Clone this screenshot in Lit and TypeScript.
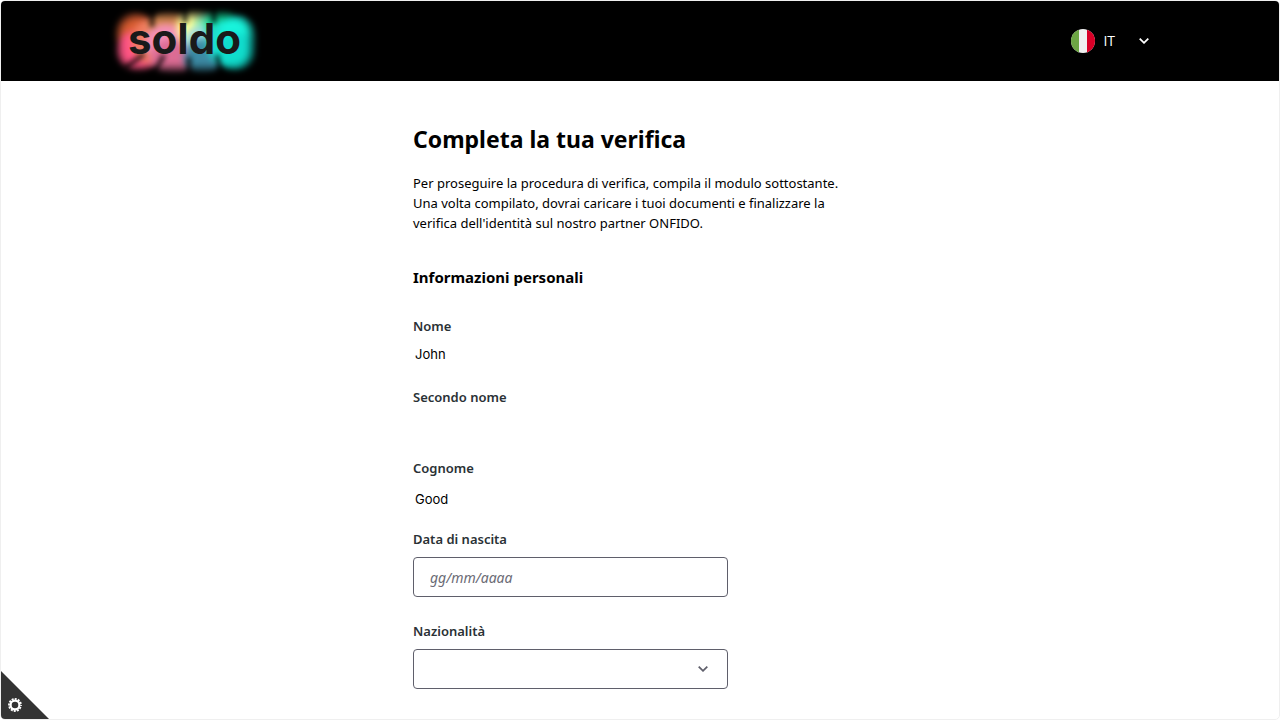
import { LitElement, html, svg, css } from "lit";
import { customElement, property, state } from "lit/decorators.js";
import { classMap } from "lit/directives/class-map.js";

const chevron = html`<svg class="chevron" width="10" height="6" viewBox="0 0 10 6" fill="none" stroke="currentColor" stroke-width="1.8" aria-hidden="true">
  <path d="M0.7 0.7 L5 4.8 L9.3 0.7" />
</svg>`;

const glowSpots: [number, number, number, number, string][] = [
  [74, 41, 60, 22, "#b06068"],
  [24, 30, 15, 16, "#d85c30"],
  [29, 51, 18, 14, "#ff5484"],
  [44, 40, 14, 16, "#f07c60"],
  [61, 26, 15, 12, "#d88a50"],
  [58, 42, 15, 12, "#f490b8"],
  [66, 57, 18, 12, "#dc6c94"],
  [87, 27, 12, 16, "#ffff98"],
  [101, 30, 9, 16, "#88eab0"],
  [94, 42, 12, 10, "#a0dce0"],
  [95, 57, 13, 12, "#3c8aa4"],
  [113, 24, 10, 13, "#10d898"],
  [119, 42, 14, 16, "#20dccc"],
  [132, 38, 16, 19, "#18f4dc"],
  [130, 52, 17, 13, "#10dccc"],
];

@customElement("soldo-logo")
export class SoldoLogo extends LitElement {
  static styles = css`
    :host {
      display: block;
      line-height: 0;
    }
    .word {
      font-family: Inter, "Open Sans", sans-serif;
      font-size: 42px;
      font-weight: 700;
      fill: #1a1a1a;
    }
  `;

  render() {
    return html`<svg width="160" height="80" viewBox="0 0 160 80" role="img" aria-label="soldo">
      <defs>
        <filter id="soft" x="-30%" y="-30%" width="160%" height="160%" color-interpolation-filters="sRGB">
          <feGaussianBlur stdDeviation="3.5" />
        </filter>
        <filter id="shade" x="-50%" y="-50%" width="200%" height="200%" color-interpolation-filters="sRGB">
          <feGaussianBlur stdDeviation="2.4" />
        </filter>
        <filter id="fade" x="-30%" y="-50%" width="160%" height="200%" color-interpolation-filters="sRGB">
          <feGaussianBlur stdDeviation="5" />
        </filter>
        <mask id="edge" maskUnits="userSpaceOnUse" x="0" y="0" width="160" height="80" style="mask-type: alpha">
          <rect x="10" y="14" width="134" height="54" rx="18" fill="#fff" filter="url(#fade)" />
        </mask>
      </defs>
      <g mask="url(#edge)">
        <g filter="url(#soft)">
          ${glowSpots.map(([x, y, rx, ry, c]) => svg`<ellipse cx=${x} cy=${y} rx=${rx + 6} ry=${ry + 7} fill=${c} />`)}
        </g>
        <g filter="url(#shade)" stroke="#000" stroke-width="5" opacity="0.7">
          <path d="M44 2 V26 M77 2 V22 M106 2 V22 M36 53 L16 68 M56 54 L44 76 M81 56 V76 M109 54 L114 78" />
        </g>
      </g>
      <text class="word" x="20" y="53">soldo</text>
    </svg>`;
  }
}

@customElement("language-menu")
export class LanguageMenu extends LitElement {
  @property() code = "IT";

  static styles = css`
    :host {
      display: block;
    }
    .trigger {
      display: flex;
      align-items: center;
      gap: 8px;
      padding: 0;
      border: 0;
      background: none;
      color: #fff;
      font: 14px/20px "Open Sans", sans-serif;
      cursor: pointer;
    }
    .chevron {
      margin-left: 16px;
    }
  `;

  render() {
    return html`<button class="trigger" type="button" aria-haspopup="listbox" aria-label="Lingua: ${this.code}">
      <svg width="24" height="24" viewBox="0 0 24 24" aria-hidden="true">
        <defs><clipPath id="disc"><circle cx="12" cy="12" r="12" /></clipPath></defs>
        <g clip-path="url(#disc)">
          <rect width="24" height="24" fill="#f0f0f0" />
          <rect width="8" height="24" fill="#6da544" />
          <rect x="16" width="8" height="24" fill="#d80027" />
        </g>
      </svg>
      <span>${this.code}</span>
      ${chevron}
    </button>`;
  }
}

@customElement("app-root")
export class AppRoot extends LitElement {
  @state() private people = [
    { id: "nome", label: "Nome", value: "John", tall: false },
    { id: "secondo", label: "Secondo nome", value: "", tall: true },
    { id: "cognome", label: "Cognome", value: "Good", tall: true },
  ];

  static styles = css`
    :host {
      display: block;
      box-sizing: border-box;
      min-height: 100vh;
      background: #fff;
      color: #000;
      font: 13px/20px "Noto Sans", "Open Sans", sans-serif;
    }
    * {
      box-sizing: border-box;
    }
    .frame {
      position: relative;
      min-height: 100vh;
      border: 1px solid #efefef;
      border-radius: 5px;
      overflow: hidden;
    }
    .bar {
      background: #000;
    }
    .bar-inner {
      display: flex;
      align-items: center;
      justify-content: space-between;
      max-width: 1080px;
      height: 80px;
      margin: 0 auto;
      padding: 0 31px 0 8px;
    }
    main {
      max-width: 454px;
      margin: 0 auto;
      padding: 40px 0 29px;
    }
    h1 {
      margin: 0 0 16px;
      font-size: 23px;
      line-height: 36px;
      font-weight: 700;
    }
    .intro {
      max-width: 440px;
      margin: 0 0 32px;
    }
    h2 {
      margin: 0 0 27px;
      font-size: 15px;
      line-height: 24px;
      font-weight: 700;
    }
    form {
      display: flex;
      flex-direction: column;
      max-width: 315px;
    }
    .field {
      display: flex;
      flex-direction: column;
      gap: 8px;
      padding-bottom: 24px;
    }
    .field.tall {
      padding-bottom: 17px;
    }
    .field:last-child {
      padding-bottom: 0;
    }
    label {
      color: #2a3135;
      font-weight: 600;
    }
    .value {
      height: 19px;
      padding: 0 2px;
      border: 0;
      background: none;
      color: #000;
      font: 13px Inter, sans-serif;
      outline: none;
    }
    .tall .value {
      height: 26px;
    }
    .box {
      width: 100%;
      height: 40px;
      padding: 0 16px;
      border: 1px solid #5f5f6b;
      border-radius: 4px;
      background: #fff;
      color: #000;
      font: 14px "Noto Sans", sans-serif;
    }
    .box::placeholder {
      color: #6b6b75;
      font-style: italic;
      opacity: 1;
    }
    .pick {
      display: grid;
      align-items: center;
      color: #5f5f6b;
    }
    .pick > * {
      grid-area: 1 / 1;
    }
    .pick select {
      appearance: none;
    }
    .pick .chevron {
      justify-self: end;
      margin-right: 20px;
      pointer-events: none;
    }
    .prefs {
      position: absolute;
      left: 0;
      bottom: 0;
      width: 48px;
      height: 48px;
      padding: 0;
      border: 0;
      background: #333;
      clip-path: polygon(0 0, 100% 100%, 0 100%);
      cursor: pointer;
    }
    .prefs svg {
      display: block;
    }
  `;

  render() {
    return html`<div class="frame">
      <header class="bar">
        <div class="bar-inner">
          <soldo-logo></soldo-logo>
          <language-menu code="IT"></language-menu>
        </div>
      </header>
      <main>
        <h1>Completa la tua verifica</h1>
        <p class="intro">
          Per proseguire la procedura di verifica, compila il modulo sottostante. Una volta compilato, dovrai caricare i
          tuoi documenti e finalizzare la verifica dell'identità sul nostro partner ONFIDO.
        </p>
        <h2>Informazioni personali</h2>
        <form>
          ${this.people.map(
            (p) => html`<div class=${classMap({ field: true, tall: p.tall })}>
              <label for=${p.id}>${p.label}</label>
              <input class="value" id=${p.id} .value=${p.value} readonly />
            </div>`,
          )}
          <div class="field">
            <label for="nascita">Data di nascita</label>
            <input class="box" id="nascita" placeholder="gg/mm/aaaa" />
          </div>
          <div class="field">
            <label for="nazione">Nazionalità</label>
            <div class="pick">
              <select class="box" id="nazione">
                <option value=""></option>
                <option value="IT">Italia</option>
              </select>
              ${chevron}
            </div>
          </div>
        </form>
      </main>
      <button class="prefs" type="button" aria-label="Preferenze cookie">
        <svg width="48" height="48" viewBox="0 0 48 48" fill="none" stroke="#fff" aria-hidden="true">
          <circle cx="14" cy="34" r="4.4" stroke-width="2.2" />
          <circle cx="14" cy="34" r="6" stroke-width="1.8" stroke-dasharray="2 1.142" stroke-dashoffset="1" />
        </svg>
      </button>
    </div>`;
  }
}
